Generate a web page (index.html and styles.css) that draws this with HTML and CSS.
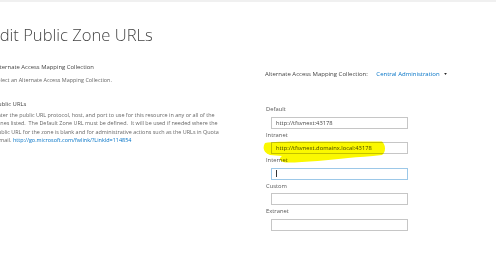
FILE: index.html
```html
<!DOCTYPE html>
<html>
<head>
  <meta charset="UTF-8">
  <title>Edit Public Zone URLs</title>
  <link rel="stylesheet" href="styles.css">
</head>
<body>
  <div class="topbar"></div>
  <div class="main">
    <div class="left">
      <h1 class="page-title">Edit Public Zone URLs</h1>
      <div class="section-title">Alternate Access Mapping Collection</div>
      <div class="section-desc">Select an Alternate Access Mapping Collection.</div>
      <div class="section-title urls">Public URLs</div>
      <p class="section-desc para">Enter the public URL protocol, host, and port to use for this resource in any or all of the<br>zones listed.&nbsp; The Default Zone URL must be defined.&nbsp; It will be used if needed where the<br>public URL for the zone is blank and for administrative actions such as the URLs in Quota<br>e-mail. <a href="#">http://go.microsoft.com/fwlink/?LinkId=114854</a></p>
    </div>
    <div class="right">
      <div class="collection">
        Alternate Access Mapping Collection:
        <a href="#" class="picker">Central Administration</a>
        <svg class="arrow" width="3" height="2" viewBox="0 0 4 3"><path d="M0 0h4L2 3z" fill="#222"/></svg>
      </div>
      <div class="field">
        <div class="label">Default</div>
        <div class="textbox">http://tfsvnext:43178</div>
      </div>
      <div class="field">
        <div class="label">Intranet</div>
        <div class="textbox">http://tfsvnext.domainx.local:43178</div>
      </div>
      <div class="field">
        <div class="label">Internet</div>
        <div class="textbox focused"><span class="caret"></span></div>
      </div>
      <div class="field">
        <div class="label">Custom</div>
        <div class="textbox"></div>
      </div>
      <div class="field">
        <div class="label">Extranet</div>
        <div class="textbox"></div>
      </div>
    </div>
  </div>
  <svg class="marker" width="496" height="256" viewBox="0 0 496 256">
    <path d="M265 143 C275 141 300 141.5 330 141.5 L382 141.5 C386 145 386 152 382 155 C370 156.5 358 157 348 158 C330 160 305 162.5 288 162.5 C280 162.5 278 159 282 156 L270 155 C264 153 262 148 265 143 Z" fill="#fbf800"/>
  </svg>
</body>
</html>
```

FILE: styles.css
```css
body { margin: 0; background: #fff; font-family: "Open Sans", Arial, sans-serif; color: #444; overflow: hidden; }
.topbar { height: 2px; background: #f0f0f0; }
.main { display: grid; grid-template-columns: 270.5px 1fr; margin-left: -5.5px; padding-top: 21px; }
.page-title { margin: 0 0 0 -4px; font-weight: 300; font-size: 16.6px; line-height: 24px; color: #444; white-space: nowrap; }
.section-title { margin-top: 15px; font-size: 5.9px; line-height: 10px; color: #444; white-space: nowrap; }
.section-title.urls { margin-top: 14px; }
.section-desc { margin: 3px 0 0; font-size: 5.45px; line-height: 10px; color: #666; white-space: nowrap; }
.para { margin-top: 1.75px; line-height: 8.5px; }
.para a { color: #0072c6; text-decoration: none; }
.right { padding-top: 46px; }
.collection { font-size: 6px; line-height: 10px; color: #444; white-space: nowrap; }
.picker { color: #0072c6; text-decoration: none; margin-left: 7px; }
.arrow { margin-left: 3px; vertical-align: middle; }
.field { padding-left: 1px; }
.collection + .field { margin-top: 24px; }
.label { font-size: 5.8px; line-height: 13.5px; color: #555; }
.textbox { box-sizing: border-box; height: 12px; width: 137px; margin-left: 5px; border: 1px solid #c6c6c6; padding: 0 4px; font-size: 5.8px; line-height: 10px; color: #444; white-space: nowrap; }
.textbox.focused { border-color: #9cc8e8; }
.caret { display: inline-block; width: 1px; height: 7px; background: #333; vertical-align: middle; }
.marker { position: absolute; left: 0; top: 0; pointer-events: none; mix-blend-mode: multiply; }
```
